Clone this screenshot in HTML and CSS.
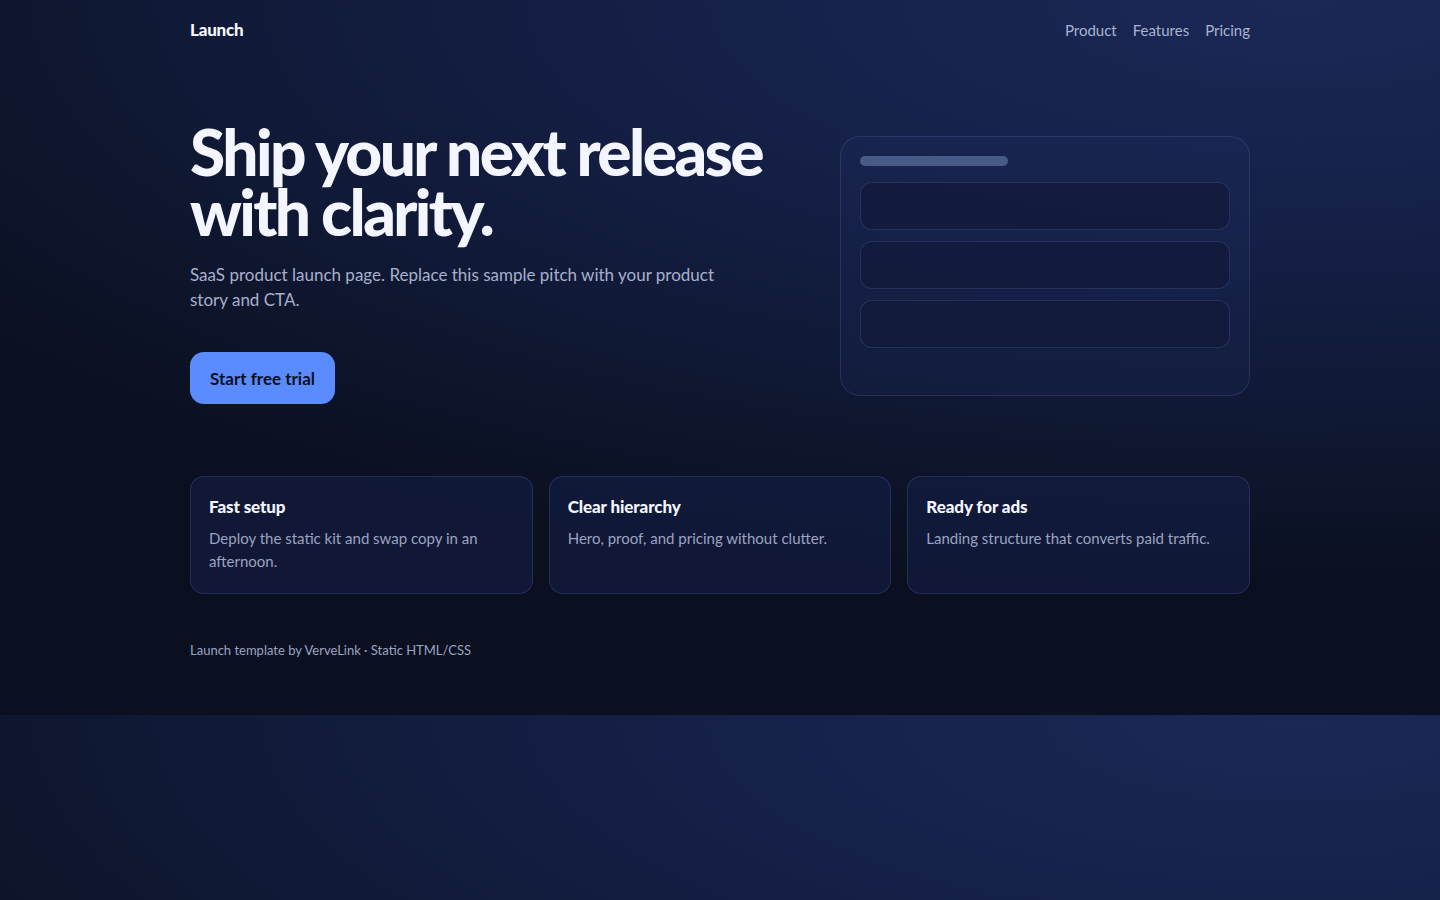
FILE: index.html
```html
<!DOCTYPE html>
<html lang="en">
<head>
<meta charset="utf-8">
<title>Launch — Ship your next release with clarity</title>
<link rel="stylesheet" href="styles.css">
</head>
<body>
  <div class="wrap">
    <header class="topbar">
      <a class="logo" href="#">Launch</a>
      <nav class="nav">
        <a href="#">Product</a>
        <a href="#">Features</a>
        <a href="#">Pricing</a>
      </nav>
    </header>

    <section class="hero">
      <div class="hero-copy">
        <h1 class="hero-title">Ship your next release with clarity.</h1>
        <p class="hero-lead">SaaS product launch page. Replace this sample pitch with your product story and CTA.</p>
        <a class="btn-primary" href="#">Start free trial</a>
      </div>
      <div class="mock" aria-hidden="true">
        <div class="mock-bar"></div>
        <div class="mock-row"></div>
        <div class="mock-row"></div>
        <div class="mock-row"></div>
      </div>
    </section>

    <section class="features">
      <article class="feature">
        <h3 class="feature-title">Fast setup</h3>
        <p class="feature-text">Deploy the static kit and swap copy in an afternoon.</p>
      </article>
      <article class="feature">
        <h3 class="feature-title">Clear hierarchy</h3>
        <p class="feature-text">Hero, proof, and pricing without clutter.</p>
      </article>
      <article class="feature">
        <h3 class="feature-title">Ready for ads</h3>
        <p class="feature-text">Landing structure that converts paid traffic.</p>
      </article>
    </section>

    <footer class="footer">Launch template by VerveLink · Static HTML/CSS</footer>
  </div>
</body>
</html>
```

FILE: styles.css
```css
* {
  box-sizing: border-box;
}

body {
  margin: 0;
  font-family: "Lato", "Noto Sans", sans-serif;
  color: #f3f5ff;
  background:
    radial-gradient(140% 100% at 90% 0%, #1b2856 0%, #16214a 28%, #101936 55%, #0b1020 82%),
    #0b1020;
}

a {
  color: inherit;
  text-decoration: none;
}

.wrap {
  width: 1060px;
  margin: 0 auto;
}

/* top navigation */
.topbar {
  display: flex;
  justify-content: space-between;
  align-items: center;
  padding-top: 20px;
}

.logo {
  font-size: 17px;
  font-weight: 900;
  letter-spacing: -0.2px;
  line-height: 20px;
  color: #f5f7ff;
}

.nav {
  display: flex;
  gap: 16px;
  font-size: 15px;
  line-height: 20px;
}

.nav a {
  color: #a9b3d1;
}

/* hero */
.hero {
  display: grid;
  grid-template-columns: 1fr 410px;
  gap: 48px;
  align-items: center;
  margin-top: 82px;
}

.hero-title {
  margin: 0 0 20px;
  font-size: 64px;
  line-height: 60px;
  font-weight: 900;
  letter-spacing: -2.6px;
  color: #f4f6ff;
  max-width: 600px;
}

.hero-lead {
  margin: 0;
  max-width: 540px;
  font-size: 17px;
  line-height: 25px;
  color: #a7b0cc;
}

.btn-primary {
  display: inline-flex;
  align-items: center;
  height: 52px;
  margin-top: 40px;
  padding: 0 20px;
  border-radius: 14px;
  background: #5b8cff;
  color: #0b1020;
  font-size: 17px;
  font-weight: 700;
}

/* product mockup panel */
.mock {
  height: 260px;
  margin-top: 6px;
  padding: 19px;
  border: 1px solid rgba(120, 140, 220, 0.18);
  border-radius: 20px;
  background: rgba(30, 44, 95, 0.22);
  display: flex;
  flex-direction: column;
  gap: 11px;
}

.mock-bar {
  width: 148px;
  height: 10px;
  border-radius: 5px;
  background: #4a5a86;
  margin-bottom: 5px;
}

.mock-row {
  height: 48px;
  border-radius: 12px;
  border: 1px solid rgba(110, 130, 215, 0.22);
  background: rgba(18, 26, 58, 0.75);
}

/* feature cards */
.features {
  display: grid;
  grid-template-columns: repeat(3, 1fr);
  gap: 16px;
  margin-top: 72px;
}

.feature {
  padding: 18px 18px 20px;
  border: 1px solid rgba(120, 140, 220, 0.2);
  border-radius: 14px;
  background: rgba(20, 30, 70, 0.6);
}

.feature-title {
  margin: 0 0 8px;
  font-size: 17px;
  line-height: 24px;
  font-weight: 900;
  letter-spacing: -0.1px;
  color: #f4f6ff;
}

.feature-text {
  margin: 0;
  font-size: 15px;
  line-height: 23px;
  color: #9ba3c0;
}

/* footer */
.footer {
  padding: 46px 0 55px;
  font-size: 13px;
  line-height: 20px;
  color: #9aa4c4;
}
```
